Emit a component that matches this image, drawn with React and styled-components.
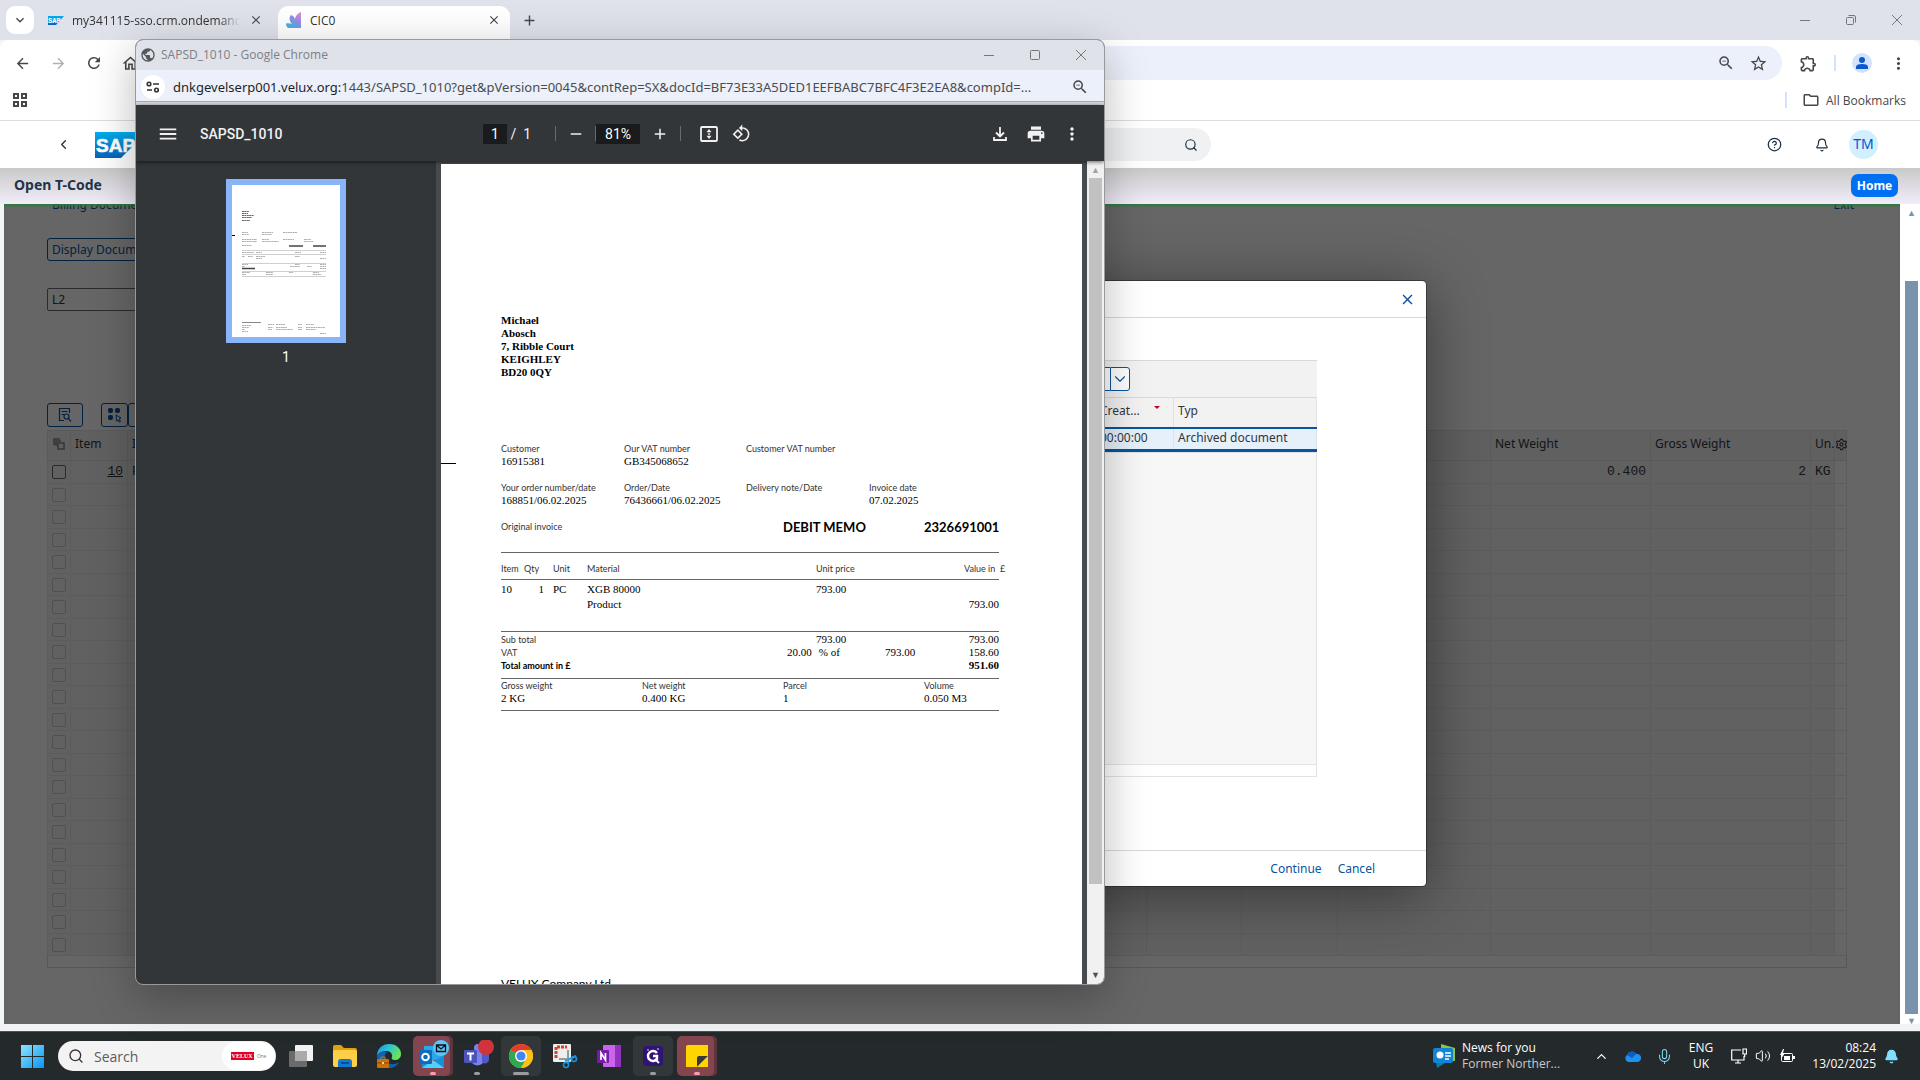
import React from 'react';
import styled, { createGlobalStyle, css } from 'styled-components';
import {
  MdArrowBack, MdArrowForward, MdRefresh, MdOutlineHome, MdZoomOut, MdStarBorder,
  MdOutlineExtension, MdMoreVert, MdPublic, MdMenu, MdRemove, MdAdd,
  MdPrint, MdOutlineFolder, MdClose, MdRotate90DegreesCcw, MdExpandMore,
} from 'react-icons/md';
import { Search, CircleHelp, Bell, Settings, ChevronLeft, ChevronDown, ChevronUp, Mic, Volume2 } from 'lucide-react';

const ui = '"Open Sans", "Noto Sans", sans-serif';
const sap = '"Noto Sans", "Open Sans", sans-serif';
const serif = '"Liberation Serif", "Times New Roman", serif';
const geo = 'Lato, "Open Sans", sans-serif';

const GlobalStyle = createGlobalStyle`
  * { box-sizing: border-box; }
  body { margin: 0; font-family: ${ui}; overflow: hidden; }
  button, input { font-family: inherit; margin: 0; }
  table { border-collapse: collapse; border-spacing: 0; }
  svg { display: block; flex-shrink: 0; }
`;

/* ---------- small drawings ---------- */

const SapLogo = ({ w, h }) => (
  <svg width={w} height={h} viewBox="0 0 52 26" preserveAspectRatio="none">
    <defs>
      <linearGradient id="sapblue" x1="0" y1="0" x2="0" y2="1">
        <stop offset="0" stopColor="#00aeef" />
        <stop offset="1" stopColor="#0a62b8" />
      </linearGradient>
    </defs>
    <path d="M0 0H52L26 26H0Z" fill="url(#sapblue)" />
    <text x="1" y="20" fontFamily="Liberation Sans, sans-serif" fontWeight="700" fontSize="19" fill="#fff" stroke="#fff" strokeWidth=".6">SAP</text>
  </svg>
);

const PetalIcon = () => (
  <svg width="16" height="16" viewBox="0 0 16 16">
    <defs>
      <linearGradient id="petal" x1="1" y1="0" x2="0.3" y2="1">
        <stop offset="0" stopColor="#f08cc8" />
        <stop offset="0.5" stopColor="#8f8ee8" />
        <stop offset="1" stopColor="#3fb4dc" />
      </linearGradient>
    </defs>
    <path d="M15 0V16H3C1 16 0 14 0 11.500C2 11 4 11 6 12C3 9 3 5 5 3C8 4 9 6 9 8C9 4 12 1 15 0Z" fill="url(#petal)" />
  </svg>
);

const MinimizeIcon = () => (
  <svg width="10" height="10"><path d="M0 5.5H10" stroke="#777" fill="none" /></svg>
);
const MaximizeIcon = () => (
  <svg width="10" height="10"><rect x=".5" y=".5" width="9" height="9" rx="1" stroke="#777" fill="none" /></svg>
);
const RestoreIcon = () => (
  <svg width="10" height="10">
    <rect x=".5" y="2.5" width="7" height="7" rx="1" stroke="#777" fill="none" />
    <path d="M2.5 .5H8Q9.5 .5 9.5 2V7.5" stroke="#777" fill="none" />
  </svg>
);
const CrossIcon = () => (
  <svg width="10" height="10"><path d="M0 0L10 10M10 0L0 10" stroke="#777" fill="none" /></svg>
);

const AppsIcon = () => (
  <svg width="14" height="14" fill="none" stroke="#474747" strokeWidth="2">
    <path d="M1 1H5V5H1ZM9 1H13V5H9ZM1 9H5V13H1ZM9 9H13V13H9Z" />
  </svg>
);

const ProfileIcon = () => (
  <svg width="20" height="20">
    <circle cx="10" cy="10" r="10" fill="#d3e3fd" />
    <circle cx="10" cy="7" r="3" fill="#0b57d0" />
    <path d="M4 16V14Q4 11 10 11Q16 11 16 14V16Z" fill="#0b57d0" />
  </svg>
);

const SiteIcon = () => (
  <svg width="14" height="14" fill="none" stroke="#333" strokeWidth="1.6">
    <circle cx="3" cy="4" r="1.8" /><path d="M7 4H13M1 10H6" /><circle cx="10.5" cy="10" r="1.8" />
  </svg>
);

const FitPageIcon = () => (
  <svg width="18" height="16" viewBox="0 0 18 16">
    <rect x="1" y="1" width="16" height="14" rx="1" fill="none" stroke="#f1f1f1" strokeWidth="1.8" />
    <path d="M9 3L11.5 6.3H6.5ZM9 13L11.5 9.7H6.5Z" fill="#f1f1f1" />
    <rect x="8" y="7.3" width="2" height="1.4" fill="#f1f1f1" />
  </svg>
);

const DownloadIcon = () => (
  <svg width="14" height="14" fill="none" stroke="#f1f1f1" strokeWidth="1.8">
    <path d="M7 0V9M3 5.5L7 9.5L11 5.5M1 10V13H13V10" />
  </svg>
);

const FindDocIcon = () => (
  <svg width="14" height="16" fill="none" stroke="#0854a0" strokeWidth="1.2">
    <path d="M6 13.5H1.5V1.5H11.5V6M3.5 4.5H9.5M3.5 7.5H6" />
    <circle cx="8.5" cy="9.5" r="2.5" /><path d="M10.5 11.5L13 14.5" />
  </svg>
);

const SelectAllIcon = ({ outline }) => (
  <svg width="16" height="16">
    <g fill={outline ? 'none' : '#0854a0'} stroke="#0854a0">
      <rect x="1.5" y="1.5" width="4" height="4" rx="1" /><rect x="8.5" y="1.5" width="4" height="4" rx="1" />
      <rect x="1.5" y="8.5" width="4" height="4" rx="1" />
    </g>
    <path d="M9 8L14 11L12 12L13.5 14.5L12 15L11 13L9.5 14Z" fill="none" stroke="#0854a0" />
  </svg>
);

const CopiesIcon = () => (
  <svg width="12" height="12" fill="none" stroke="#85888b" strokeWidth="1.6">
    <path d="M1 7V1H7M3 8V3H8M5 5H11V11H5Z" />
  </svg>
);

const GridIcon = () => (
  <svg width="12" height="12" fill="none" stroke="#0854a0">
    <path d="M.5 .5H11.5V11.5H.5ZM.5 4H11.5M.5 8H11.5M4 .5V11.5M8 .5V11.5" />
  </svg>
);

const Thumbnail = () => {
  const bars = [
    [10, 26, 7], [10, 28, 6], [10, 30, 12], [10, 32, 10], [10, 35, 8],
    [10, 47, 6], [30, 47, 11], [51, 47, 14], [10, 49, 7], [30, 49, 10],
    [10, 54, 15], [30, 54, 7], [51, 54, 11], [72, 54, 7], [10, 56, 15], [30, 56, 17], [72, 56, 9],
    [10, 60, 10], [10, 67, 12], [24, 67, 6], [63, 67, 6], [88, 67, 6],
    [10, 71, 3], [16, 71, 5], [24, 71, 9], [63, 71, 5], [24, 73, 6], [88, 73, 6],
    [10, 79, 6], [63, 79, 5], [88, 79, 6], [10, 81, 3], [58, 81, 10], [75, 81, 5], [88, 81, 6],
    [88, 83, 6], [10, 87, 8], [34, 87, 7], [57, 87, 4], [81, 87, 6], [10, 89, 4], [34, 89, 7], [81, 89, 8],
    [10, 140, 9], [36, 139, 6], [44, 139, 9], [66, 139, 4], [74, 139, 8], [10, 142, 7], [36, 142, 5],
    [44, 142, 11], [66, 142, 4], [74, 142, 19], [10, 144, 3], [36, 144, 4], [44, 144, 17], [66, 144, 4], [74, 144, 10],
    [10, 146, 6], [88, 148, 6],
  ];
  return (
    <svg width="108" height="152">
      <rect width="108" height="152" fill="#fff" />
      {bars.map(([x, y, w], i) => (
        <path key={i} d={`M${x} ${y}.5h${w}`} stroke={i < 5 ? '#666' : '#b0b0b0'} strokeDasharray="2 .4" />
      ))}
      <path d="M57 61h14M81 61h13M10 83.5h13" stroke="#444" strokeWidth="1.5" />
      <path d="M10 137.5h19" stroke="#888" />
      <path d="M10 65.5h84M10 69.5h84M10 78.5h84M10 86.5h84M10 91.5h84" stroke="#d0d0d0" />
      <path d="M0 50.5h3" stroke="#000" />
    </svg>
  );
};

/* ---------- taskbar drawings ---------- */

const WindowsLogo = () => (
  <svg width="23" height="23" viewBox="0 0 23 23">
    <defs>
      <linearGradient id="win" x1="0" y1="0" x2="1" y2="1">
        <stop offset="0" stopColor="#8fe4ff" /><stop offset="1" stopColor="#0a94f0" />
      </linearGradient>
    </defs>
    <path d="M0 0H11V11H0ZM12 0H23V11H12ZM0 12H11V23H0ZM12 12H23V23H12Z" fill="url(#win)" />
  </svg>
);
const TaskViewIcon = () => (
  <svg width="24" height="22">
    <rect x="6" width="18" height="16" rx="1" fill="#f2f2f2" />
    <rect y="6" width="18" height="16" rx="1" fill="#777" fillOpacity=".85" />
    <rect x="6" y="6" width="12" height="10" fill="#aaa" />
  </svg>
);
const FolderIcon = () => (
  <svg width="24" height="22">
    <path d="M0 2Q0 0 2 0H8L11 3H22Q24 3 24 5V10H0Z" fill="#e0a010" />
    <rect y="5" width="24" height="17" rx="2" fill="#ffcf48" />
    <path d="M5 22V17Q5 14 8 14H16Q19 14 19 17V22Z" fill="#1377cf" />
    <path d="M8 18H16" stroke="#0a4d92" strokeWidth="2" />
  </svg>
);
const EdgeIcon = () => (
  <svg width="26" height="26" viewBox="0 0 26 26">
    <defs>
      <linearGradient id="edge" x1="0" y1="0" x2="1" y2=".4">
        <stop offset="0" stopColor="#1b8fe0" /><stop offset=".5" stopColor="#2cc3d5" /><stop offset="1" stopColor="#6be35b" />
      </linearGradient>
    </defs>
    <path d="M1 13C1 5 7 1 13 1C21 1 25 6 25 11C25 15 22 17 19 17C16 17 15 16 16 14C17 11 14 8 11 8C7 8 3 9 1 13Z" fill="url(#edge)" />
    <path d="M1 13C3 9 7 8 11 9C8 11 8 16 11 19C14 22 19 22 23 19C21 23 17 25 13 25C6 25 1 20 1 13Z" fill="#0f63b5" />
    <rect x="1" y="16" width="12" height="9" rx="1" fill="#c9720c" /><path d="M1 20H13" stroke="#8a4700" />
    <path d="M5 16V14H9V16" stroke="#c9720c" fill="none" /><rect x="6" y="19" width="2" height="2" fill="#ffd25e" />
  </svg>
);
const OutlookIcon = () => (
  <svg width="36" height="32" viewBox="0 0 36 32">
    <rect x="9" y="6" width="18" height="14" fill="#28a8ea" />
    <path d="M7 15L18 22L29 15V28H7Z" fill="#1490df" />
    <path d="M7 28L18 20L29 28Z" fill="#50d0ff" />
    <rect x="4" y="10" width="13" height="14" rx="1" fill="#0f6cbd" />
    <circle cx="10.5" cy="17" r="3.3" fill="none" stroke="#fff" strokeWidth="2" />
    <circle cx="26" cy="8" r="8" fill="#5cc5f8" />
    <path d="M21.5 5H30.5V11.5H21.5ZM21.5 5L26 9L30.5 5" fill="none" stroke="#111" strokeWidth="1.3" />
  </svg>
);
const TeamsIcon = () => (
  <svg width="34" height="32" viewBox="0 0 34 32">
    <circle cx="18" cy="8" r="4" fill="#7b83eb" />
    <path d="M11 12H24V21A7 7 0 0 1 11 21Z" fill="#7b83eb" /><path d="M22 12H29V20A4 4 0 0 1 22 22Z" fill="#5059c9" />
    <rect x="4" y="10" width="13" height="13" rx="1" fill="#4b53bc" />
    <path d="M7 13.5H14M10.5 13.5V20.5" stroke="#fff" strokeWidth="2" />
    <circle cx="26" cy="7" r="8" fill="#d13438" />
  </svg>
);
const ChromeIcon = () => (
  <svg width="24" height="24" viewBox="0 0 24 24">
    <circle cx="12" cy="12" r="12" fill="#fbc116" />
    <path d="M12 12L1.6 6A12 12 0 0 1 22.4 6Z" fill="#e33b2e" />
    <path d="M12 12L1.6 6A12 12 0 0 0 12 24L17 15Z" fill="#2da94f" />
    <path d="M12 6H22.4A12 12 0 0 1 12 24L17.2 15Z" fill="#fbc116" />
    <circle cx="12" cy="12" r="6" fill="#fff" /><circle cx="12" cy="12" r="4.6" fill="#4285f4" />
  </svg>
);
const SnipIcon = () => (
  <svg width="26" height="26" viewBox="0 0 26 26">
    <rect x="1" y="1" width="18" height="18" rx="1" fill="#eee" />
    <path d="M4 15V4H15" fill="none" stroke="#d8401f" strokeWidth="3" strokeDasharray="3 1" />
    <path d="M7 16H16V7" stroke="#999" strokeWidth="2" fill="none" />
    <path d="M13 18L24 13M16 21L17 15" stroke="#2aa3e8" strokeWidth="2" />
    <circle cx="14" cy="22" r="2.5" fill="none" stroke="#1e8fd8" strokeWidth="1.6" />
    <circle cx="22" cy="16" r="2.5" fill="none" stroke="#1e8fd8" strokeWidth="1.6" />
  </svg>
);
const OneNoteIcon = () => (
  <svg width="24" height="22" viewBox="0 0 24 22">
    <rect x="6" width="18" height="22" rx="1" fill="#ca64ea" /><path d="M18 0H24V22H18Z" fill="#9332bf" />
    <rect y="5" width="12" height="13" rx="1" fill="#7719aa" />
    <path d="M4 15V8L8.5 15V8" stroke="#fff" strokeWidth="1.7" fill="none" />
  </svg>
);
const PurpleIcon = () => (
  <svg width="20" height="20" viewBox="0 0 20 20">
    <rect width="20" height="20" rx="3" fill="#2f1375" />
    <path d="M14 7A5 5 0 1 0 14 13V10H10" fill="none" stroke="#fff" strokeWidth="2.4" />
    <path d="M12 13L16 17" stroke="#fff" strokeWidth="2" />
    <circle cx="5" cy="4" r=".8" fill="#fff" /><circle cx="15" cy="3" r=".8" fill="#fff" />
  </svg>
);
const NotesIcon = () => (
  <svg width="22" height="22">
    <path d="M0 2Q0 0 2 0H22V11L11 22H0Z" fill="#ffd500" />
    <path d="M11 22V13Q11 11 13 11H22Z" fill="#383838" />
    <path d="M22 11V22H11Z" fill="#ffd500" />
  </svg>
);
const NewsIcon = () => (
  <svg width="24" height="24" viewBox="0 0 24 24">
    <path d="M8 0L22 4V17H8Z" fill="#8bc53f" /><path d="M2 12L20 14L4 24Z" fill="#0b7fa8" />
    <rect x="0" y="4" width="20" height="15" rx="2" fill="#1284d8" />
    <circle cx="7" cy="11" r="3.5" fill="#fff" /><path d="M12 9H18M12 12H18M12 15H16" stroke="#fff" strokeWidth="1.4" />
  </svg>
);
const CloudIcon = () => (
  <svg width="17" height="11" viewBox="0 0 17 11">
    <path d="M4 11A4 4 0 0 1 3 4A5 5 0 0 1 12 3A4 4 0 0 1 14 11Z" fill="#1e90f0" />
    <path d="M3 4A5 5 0 0 1 12 3L8 7Z" fill="#0a5cc0" />
  </svg>
);
const NetworkIcon = () => (
  <svg width="16" height="16" fill="none" stroke="#fff" strokeWidth="1.2">
    <path d="M10 2H.7V12H13V8M4 15H10M7 12V15M12 1H15.5V6H12ZM13.7 6V9" />
  </svg>
);
const BatteryIcon = () => (
  <svg width="16" height="14" viewBox="0 0 16 14">
    <rect x="2.5" y="4.5" width="11" height="8" rx="1" fill="none" stroke="#fff" />
    <rect x="5" y="7" width="6" height="4" fill="#fff" />
    <path d="M14 7H16V10H14Z" fill="#fff" />
    <path d="M4 0L1 6H3L2 10L6 4H4L5 0Z" fill="#fff" />
  </svg>
);

/* ---------- main browser window ---------- */

const Desktop = styled.div`
  position: relative;
  display: flex;
  flex-direction: column;
  height: 100vh;
  background: #f1f3f4;
`;

const IconButton = styled.button`
  display: flex;
  align-items: center;
  justify-content: center;
  width: ${p => p.$w || 28}px;
  height: ${p => p.$h || 28}px;
  padding: 0;
  border: 0;
  border-radius: ${p => p.$r || 0}px;
  background: ${p => p.$bg || 'transparent'};
  color: ${p => p.$color || '#474747'};
  flex-shrink: 0;
`;

const TabStrip = styled.div`
  display: flex;
  align-items: center;
  height: 40px;
  padding-left: 6px;
  background: #dfe2ea;
  flex-shrink: 0;
`;

const Tab = styled.div`
  display: flex;
  align-items: center;
  align-self: flex-end;
  gap: 8px;
  width: ${p => (p.$active ? 232 : 244)}px;
  height: 34px;
  padding: ${p => (p.$active ? '0 8px 6px' : '0 14px 6px')};
  border-radius: 10px 10px 0 0;
  background: ${p => (p.$active ? '#fff' : 'transparent')};
  font-size: 12px;
  color: #333;
`;

const TabTitle = styled.span`
  flex: 1;
  overflow: hidden;
  white-space: nowrap;
  ${p => p.$fade && css`
    mask-image: linear-gradient(90deg, #000 88%, transparent);
  `}
`;

const WindowButtons = styled.div`
  display: flex;
  margin-left: auto;
`;

const Divider = styled.span`
  width: 2px;
  height: 16px;
  background: #d3e3fd;
`;

const Toolbar = styled.div`
  display: flex;
  align-items: center;
  height: 46px;
  padding: 0 8px;
  gap: 8px;
  background: #fff;
  border-radius: 8px 8px 0 0;
  flex-shrink: 0;
  ${Divider} { margin-right: 4px; }
`;

const Omnibox = styled.div`
  display: flex;
  align-items: center;
  justify-content: flex-end;
  gap: 4px;
  flex: 1;
  height: 34px;
  padding-right: 10px;
  border-radius: 17px;
  background: #ecf0fa;
`;

const Bookmarks = styled.div`
  display: flex;
  align-items: center;
  justify-content: space-between;
  height: 35px;
  padding: 0 14px 6px 13px;
  background: #fff;
  border-bottom: 1px solid #dcdde0;
  flex-shrink: 0;
`;

const BookmarkLink = styled.a`
  display: flex;
  align-items: center;
  gap: 6px;
  font-size: 12px;
  color: #474747;
  text-decoration: none;
  ${Divider} { margin-right: 9px; }
`;

const Shell = styled.header`
  display: flex;
  align-items: center;
  height: 47px;
  padding: 0 42px 0 49px;
  background: #fff;
  flex-shrink: 0;
`;

const LogoLink = styled.a`
  margin-left: 18px;
`;

const ShellSearch = styled.div`
  display: flex;
  align-items: center;
  justify-content: flex-end;
  width: 500px;
  height: 33px;
  margin: 0 auto 0 564px;
  padding-right: 6px;
  border-radius: 17px;
  background: #eff1f2;
`;

const ShellActions = styled.div`
  display: flex;
  align-items: center;
  gap: 8px;
`;

const Avatar = styled.button`
  width: 29px;
  height: 29px;
  padding: 0 0 2px;
  border: 0;
  border-radius: 50%;
  background: #d1efff;
  color: #0057d2;
  font: 14px ${sap};
`;

const CodeBar = styled.div`
  display: flex;
  align-items: center;
  justify-content: space-between;
  height: 36px;
  padding: 0 22px 2px 14px;
  background: linear-gradient(#c9c9c9, #f1edf9);
  flex-shrink: 0;
`;

const CodeTitle = styled.h1`
  margin: 0;
  font: 700 14px/20px ${sap};
  color: #223548;
`;

const HomeButton = styled.button`
  width: 47px;
  height: 23px;
  padding: 0;
  border: 0;
  border-radius: 7px;
  background: #0070f2;
  color: #fff;
  font: 700 12px ${sap};
`;

const Stage = styled.div`
  display: flex;
  flex: 1;
  min-height: 0;
  padding-left: 4px;
  margin-bottom: 7px;
  background: #f4f5f6;
`;

const Screen = styled.main`
  position: relative;
  flex: 1;
  overflow: hidden;
  background: #fff;
  font: 12px ${sap};
  color: #32363a;
`;

const Shade = styled.div`
  position: absolute;
  inset: 0;
  background: rgba(0, 0, 0, 0.6);
  box-shadow: inset 0 3px 3px -1px #2c7a40;
`;

const MenuRow = styled.nav`
  display: flex;
  justify-content: space-between;
  margin-top: -10px;
  padding: 0 46px 0 48px;
  line-height: 22px;
  a { color: #0854a0; text-decoration: none; }
`;

const Form = styled.div`
  display: flex;
  flex-direction: column;
  padding: 22px 53px 0 43px;
`;

const OutlineButton = styled.button`
  display: flex;
  align-items: center;
  justify-content: ${p => (p.$start ? 'flex-start' : 'center')};
  width: ${p => p.$w}px;
  height: ${p => p.$h || 24}px;
  padding: 0 4px;
  border: 1px solid #0854a0;
  border-radius: 3px;
  background: #fff;
  color: #0854a0;
  font: 12px ${sap};
  white-space: nowrap;
`;

const DocInput = styled.input`
  width: 240px;
  height: 23px;
  margin: 27px 0 92px;
  padding: 0 4px;
  border: 1px solid #6a6d70;
  border-radius: 2px;
  font: 12px ${sap};
  color: #32363a;
`;

const ButtonRow = styled.div`
  display: flex;
  margin-bottom: 3px;
  ${OutlineButton}:first-child { margin-right: 18px; }
`;

const ItemTable = styled.table`
  width: 100%;
  table-layout: fixed;
  border: 1px solid #d9d9d9;
  th {
    height: 30px;
    padding: 0 4px 4px;
    background: #efefef;
    border: 1px solid #e2e2e2;
    font-weight: 400;
    text-align: left;
    white-space: nowrap;
  }
  td {
    height: 22px;
    padding: 0 4px;
    border: 1px solid #e5e5e5;
    background: #f3f3f3;
    font: 13px/20px "Liberation Mono", monospace;
    white-space: nowrap;
  }
  tr:nth-child(odd) td { height: 23px; }
  td.num { text-align: right; }
  td.rail { background: #fff; }
  svg { margin: 0 auto; }
  th:last-child { padding: 0 0 3px; }
`;

const Check = styled.input`
  display: block;
  appearance: none;
  width: 14px;
  height: 14px;
  border: 1px solid ${p => (p.disabled ? '#c8c8c8' : '#6a6d70')};
  border-radius: 2px;
`;

const TableFoot = styled.div`
  height: 12px;
  border: 1px solid #d9d9d9;
  border-top: 0;
`;

const PageRail = styled.div`
  display: flex;
  flex-direction: column;
  align-items: center;
  width: 20px;
  padding: 6px 2px 0 5px;
  background: #fff;
  color: #7a93ac;
  font-size: 9px;
  line-height: 6px;
`;

const PageThumb = styled.div`
  width: 13px;
  flex: 1;
  margin: 65px 0 4px;
  background: #7a93ac;
`;

const Dialog = styled.section`
  position: absolute;
  top: 77px;
  left: 25%;
  right: 25%;
  bottom: 138px;
  display: flex;
  flex-direction: column;
  background: #fff;
  border-radius: 4px;
  box-shadow: 0 8px 60px rgba(0, 0, 0, 0.45), 0 0 0 1px rgba(0, 0, 0, 0.35);
`;

const DialogHead = styled.div`
  display: flex;
  align-items: center;
  justify-content: flex-end;
  height: 37px;
  padding-right: 5px;
  border-bottom: 1px solid #d9d9d9;
`;

const DialogBody = styled.div`
  display: flex;
  flex-direction: column;
  flex: 1;
  padding: 42px 109px 73px;
`;

const DialogTools = styled.div`
  display: flex;
  align-items: center;
  justify-content: flex-end;
  height: 37px;
  padding-right: 187px;
  background: #f2f2f2;
  border-top: 1px solid #d9d9d9;
  ${OutlineButton}:first-child { border-radius: 3px 0 0 3px; border-right: 0; }
  ${OutlineButton}:last-child { border-radius: 0 3px 3px 0; padding: 0; }
`;

const ArchiveTable = styled.table`
  width: 100%;
  table-layout: fixed;
  th, td { padding: 0 4px 3px; font-weight: 400; text-align: left; white-space: nowrap; }
  th {
    height: 30px;
    background: #f2f2f2;
    border: 1px solid #e2e2e2;
    border-top-color: #d9d9d9;
  }
  td {
    height: 23px;
    line-height: 15px;
    background: #e5f0fa;
    border: 1px solid #dfe3e8;
    border-top: 2px solid #0854a0;
    border-bottom: 3px solid #0854a0;
  }
`;

const SortCell = styled.span`
  display: flex;
  align-items: center;
  gap: 14px;
  svg { margin-bottom: 6px; }
`;

const DialogFill = styled.div`
  flex: 1;
  background: #f7f7f7;
  border: 1px solid #e2e2e2;
`;

const DialogScroll = styled.div`
  height: 12px;
  border: 1px solid #e2e2e2;
  border-top: 0;
`;

const DialogFoot = styled.div`
  display: flex;
  align-items: center;
  justify-content: flex-end;
  gap: 16px;
  height: 36px;
  padding-right: 51px;
  border-top: 1px solid #d9d9d9;
`;

const TextButton = styled.button`
  padding: 0;
  border: 0;
  background: none;
  color: #0854a0;
  font: 12px ${sap};
`;

/* ---------- document viewer window ---------- */

const PopupShadow = styled.div`
  position: absolute;
  top: 39px;
  left: 135px;
  width: 970px;
  bottom: 95px;
  border-radius: 8px;
  box-shadow: 0 12px 44px rgba(0, 0, 0, 0.28);
`;

const Popup = styled(PopupShadow)`
  display: flex;
  flex-direction: column;
  overflow: hidden;
  border: 1px solid #98999c;
  background: #323639;
  box-shadow: none;
`;

const PopupTitle = styled.div`
  display: flex;
  align-items: center;
  gap: 5px;
  height: 30px;
  padding: 0 0 1px 4px;
  background: #dfe2e9;
  color: #7d7f83;
  font-size: 12px;
  svg { color: #55585c; }
`;

const PopupAddress = styled.div`
  display: flex;
  align-items: center;
  gap: 8px;
  height: 35px;
  padding: 1px 10px 0 5px;
  background: #ecf0fa;
  border-bottom: 3px solid #d5d7db;
  box-shadow: inset 0 -1px #a9acb1;
`;

const Url = styled.span`
  flex: 1;
  overflow: hidden;
  font: 13px/20px ${sap};
  white-space: nowrap;
  color: #4a4c50;
  b { font-weight: 400; color: #1f1f1f; }
`;

const PdfBar = styled.div`
  position: relative;
  display: grid;
  grid-template-columns: 333px 1fr auto;
  align-items: center;
  height: 56px;
  padding: 1px 14px 0;
  background: #323639;
  color: #f1f1f1;
  box-shadow: 0 1px 4px rgba(0, 0, 0, 0.6);
  font: 14px Roboto, sans-serif;
  flex-shrink: 0;
`;

const PdfGroup = styled.div`
  display: flex;
  align-items: center;
  gap: ${p => p.$gap || 0}px;
`;

const PdfTitle = styled.span`
  font: 500 14px Roboto, sans-serif;
`;

const PdfInput = styled.input`
  width: ${p => p.$w}px;
  height: 20px;
  padding: 0;
  border: 0;
  background: #191b1c;
  color: #fff;
  text-align: center;
  font: 14px Roboto, sans-serif;
`;

const PdfRule = styled.span`
  width: 1px;
  height: 15px;
  margin: 0 ${p => p.$r || 0}px 0 ${p => p.$l || 0}px;
  background: #686b6e;
`;

const PdfBody = styled.div`
  display: flex;
  flex: 1;
  min-height: 0;
`;

const Outline = styled.aside`
  display: flex;
  flex-direction: column;
  align-items: center;
  gap: 5px;
  width: 300px;
  padding-top: 18px;
  color: #fff;
  font: 14px/18px Roboto, sans-serif;
`;

const ThumbButton = styled.button`
  padding: 0;
  border: 6px solid #8ab4f8;
  background: #fff;
`;

const Canvas = styled.div`
  flex: 1;
  min-width: 0;
  overflow: hidden;
  padding: 3px 5px 0;
  background: #484b4e;
`;

const Sheet = styled.article`
  position: relative;
  height: 907px;
  padding: 150px 83px 0 60px;
  background: #fff;
  color: #000;
  font: 11px/13px ${serif};
`;

const FoldMark = styled.span`
  position: absolute;
  top: 299px;
  left: 0;
  width: 15px;
  height: 1px;
  background: #000;
`;

const Address = styled.address`
  margin-bottom: 64px;
  font-style: normal;
  font-weight: 700;
`;

const Facts = styled.dl`
  display: grid;
  grid-template-columns: ${p => p.$cols};
  margin: 0;
  padding: ${p => p.$pad};
  border-bottom: ${p => (p.$line ? '1px solid #666' : '0')};
  dt { font: 9px/12px ${geo}; color: #333; white-space: nowrap; }
  dd { margin: 0; height: 13px; white-space: nowrap; }
`;

const MemoRow = styled.div`
  display: grid;
  grid-template-columns: 282px 141px 1fr;
  align-items: center;
  height: 20px;
  font: 9px/12px ${geo};
  color: #333;
  white-space: nowrap;
  strong { font: 700 13px/20px ${geo}; color: #000; }
`;

const Lines = styled.table`
  width: 100%;
  table-layout: fixed;
  margin-top: 15px;
  border-top: 1px solid #666;
  th, td { padding: 0; text-align: left; white-space: nowrap; }
  th { padding: 6px 0 0; height: 27px; font: 9px/12px ${geo}; color: #333; border-bottom: 1px solid #666; }
  td { height: 15px; vertical-align: bottom; }
  tbody tr:first-child td { height: 16px; }
  .right { text-align: right; }
  .qty { padding-right: 9px; text-align: right; }
`;

const Totals = styled.table`
  width: 100%;
  table-layout: fixed;
  margin-top: 20px;
  border-top: 1px solid #666;
  border-bottom: 1px solid #666;
  th, td { height: 13px; padding: 0; line-height: 13px; white-space: nowrap; }
  th { font: 9px/13px ${geo}; color: #333; text-align: left; }
  td:last-child { text-align: right; }
  tr:first-child > * { padding-top: 1px; }
  tr:last-child > * { padding-bottom: 6px; font-weight: 700; color: #000; }
`;

const Company = styled.p`
  margin: 265px 0 0;
  font: 12px/16px ${geo};
`;

const PdfRail = styled.div`
  display: flex;
  flex-direction: column;
  align-items: center;
  width: 17px;
  padding: 6px 2px;
  background: #f1f1f1;
  color: #505050;
  font-size: 9px;
  line-height: 6px;
  span:first-child { color: #a3a3a3; }
`;

const PdfThumb = styled.div`
  width: 13px;
  height: 87%;
  margin: 5px 0 auto;
  background: #c1c1c1;
`;

/* ---------- taskbar ---------- */

const Taskbar = styled.footer`
  display: flex;
  align-items: center;
  height: 49px;
  padding: 0 14px 0 21px;
  background: #242a2b;
  border-top: 1px solid #4d5253;
  color: #fff;
  flex-shrink: 0;
`;

const SearchPill = styled.label`
  display: flex;
  align-items: center;
  gap: 10px;
  width: 218px;
  height: 30px;
  margin: 0 3px 0 14px;
  padding: 0 1px 0 10px;
  border-radius: 15px;
  background: #f3f3f3;
  color: #333;
  input {
    flex: 1;
    min-width: 0;
    padding: 0;
    border: 0;
    background: none;
    font-size: 14px;
    &::placeholder { color: #5c5c5c; opacity: 1; }
  }
`;

const Promo = styled.span`
  display: flex;
  align-items: center;
  justify-content: center;
  gap: 3px;
  width: 53px;
  height: 28px;
  border-radius: 14px;
  background: #fff;
  font-size: 5px;
  color: #777;
  b { padding: 0 1px; background: #e2001a; color: #fff; font: 700 6px/8px ${serif}; }
`;

const TaskItem = styled.button`
  position: relative;
  display: flex;
  align-items: center;
  justify-content: center;
  width: 40px;
  height: 40px;
  margin: 0 2px;
  padding: 0;
  border: 0;
  border-radius: 5px;
  background: ${p => (p.$alert ? '#84454e' : p.$open ? '#32383a' : 'transparent')};
  box-shadow: ${p => (p.$alert ? 'inset -3px 0 #5e353c' : 'none')};
  &::after {
    content: '';
    position: absolute;
    bottom: 1px;
    width: ${p => p.$dot || 0}px;
    height: 3px;
    border-radius: 2px;
    background: ${p => (p.$alert ? '#ff9aa8' : '#9a9d9e')};
  }
`;

const Tray = styled.div`
  display: flex;
  align-items: center;
  margin-left: auto;
  font-size: 12px;
  line-height: 16px;
`;

const News = styled.button`
  display: flex;
  align-items: center;
  gap: 5px;
  width: 159px;
  padding: 0;
  border: 0;
  background: none;
  color: #fff;
  font-size: 12px;
  line-height: 16px;
  text-align: left;
  white-space: nowrap;
  small { display: block; font-size: 12px; color: #c9cbcc; }
`;

const TrayCell = styled.div`
  display: flex;
  justify-content: ${p => (p.$end ? 'flex-end' : 'center')};
  width: ${p => p.$w}px;
  text-align: ${p => (p.$end ? 'right' : 'center')};
`;

const taskItems = [
  { label: 'Task view', icon: <TaskViewIcon /> },
  { label: 'File Explorer', icon: <FolderIcon /> },
  { label: 'Edge', icon: <EdgeIcon /> },
  { label: 'Outlook', icon: <OutlookIcon />, alert: true, dot: 6 },
  { label: 'Teams', icon: <TeamsIcon />, dot: 6 },
  { label: 'Chrome', icon: <ChromeIcon />, open: true, dot: 16 },
  { label: 'Snipping Tool', icon: <SnipIcon /> },
  { label: 'OneNote', icon: <OneNoteIcon /> },
  { label: 'Recorder', icon: <PurpleIcon />, open: true, dot: 6 },
  { label: 'Sticky Notes', icon: <NotesIcon />, alert: true, dot: 6 },
];

const emptyRows = Array.from({ length: 21 }, (_, i) => i);

const Cols = ({ widths }) => (
  <colgroup>
    {widths.map((w, i) => <col key={i} width={w || undefined} />)}
  </colgroup>
);

const Invoice = () => (
  <Sheet>
    <FoldMark />
    <Address>
      Michael<br />Abosch<br />7, Ribble Court<br />KEIGHLEY<br />BD20 0QY
    </Address>
    <Facts $cols="123px 122px 123px 1fr" $pad="0 0 14px">
      <div><dt>Customer</dt><dd>16915381</dd></div>
      <div><dt>Our VAT number</dt><dd>GB345068652</dd></div>
      <div><dt>Customer VAT number</dt><dd /></div>
    </Facts>
    <Facts $cols="123px 122px 123px 1fr" $pad="0 0 10px">
      <div><dt>Your order number/date</dt><dd>168851/06.02.2025</dd></div>
      <div><dt>Order/Date</dt><dd>76436661/06.02.2025</dd></div>
      <div><dt>Delivery note/Date</dt><dd /></div>
      <div><dt>Invoice date</dt><dd>07.02.2025</dd></div>
    </Facts>
    <MemoRow>
      <span>Original invoice</span>
      <strong>DEBIT MEMO</strong>
      <strong>2326691001</strong>
    </MemoRow>
    <Lines>
      <Cols widths={[23, 29, 34, 229, 0, 35]} />
      <thead>
        <tr><th>Item</th><th>Qty</th><th>Unit</th><th>Material</th><th>Unit price</th><th>Value in &nbsp;£</th></tr>
      </thead>
      <tbody>
        <tr><td>10</td><td className="qty">1</td><td>PC</td><td>XGB 80000</td><td>793.00</td><td /></tr>
        <tr><td /><td /><td /><td>Product</td><td /><td className="right">793.00</td></tr>
      </tbody>
    </Lines>
    <Totals>
      <Cols widths={[0, 29, 69, 54, 60]} />
      <tbody>
        <tr><th>Sub total</th><td /><td>793.00</td><td /><td>793.00</td></tr>
        <tr><th>VAT</th><td>20.00</td><td>&nbsp;% of</td><td>793.00</td><td>158.60</td></tr>
        <tr><th>Total amount in £</th><td /><td /><td /><td>951.60</td></tr>
      </tbody>
    </Totals>
    <Facts $cols="141px 141px 141px 1fr" $pad="1px 0 5px" $line>
      <div><dt>Gross weight</dt><dd>2 KG</dd></div>
      <div><dt>Net weight</dt><dd>0.400 KG</dd></div>
      <div><dt>Parcel</dt><dd>1</dd></div>
      <div><dt>Volume</dt><dd>0.050 M3</dd></div>
    </Facts>
    <Company>VELUX Company Ltd</Company>
  </Sheet>
);

const Viewer = () => (
  <Popup as="section">
    <PopupTitle>
      <MdPublic size={16} />
      <span>SAPSD_1010 - Google Chrome</span>
      <WindowButtons>
        <IconButton $w={46} aria-label="Minimise"><MinimizeIcon /></IconButton>
        <IconButton $w={46} aria-label="Maximise"><MaximizeIcon /></IconButton>
        <IconButton $w={46} aria-label="Close"><CrossIcon /></IconButton>
      </WindowButtons>
    </PopupTitle>
    <PopupAddress>
      <IconButton $w={24} $h={24} $r={12} $bg="#fff" aria-label="Site information"><SiteIcon /></IconButton>
      <Url><b>dnkgevelserp001.velux.org:</b>1443/SAPSD_1010?get&amp;pVersion=0045&amp;contRep=SX&amp;docId=BF73E33A5DED1EEFBABC7BFC4F3E2EA8&amp;compId=...</Url>
      <IconButton $w={28} $h={24} aria-label="Zoom"><MdZoomOut size={18} /></IconButton>
    </PopupAddress>
    <PdfBar>
      <PdfGroup $gap={14}>
        <IconButton $color="#f1f1f1" $w={36} aria-label="Menu"><MdMenu size={22} /></IconButton>
        <PdfTitle>SAPSD_1010</PdfTitle>
      </PdfGroup>
      <PdfGroup>
        <PdfInput $w={24} defaultValue="1" aria-label="Page" />
        <span>&nbsp;/&nbsp; 1</span>
        <PdfRule $l={24} $r={6} />
        <IconButton $color="#f1f1f1" $w={28} aria-label="Zoom out"><MdRemove size={18} /></IconButton>
        <PdfRule $l={5} />
        <PdfInput $w={44} defaultValue="81%" aria-label="Zoom level" />
        <IconButton $color="#f1f1f1" $w={40} aria-label="Zoom in"><MdAdd size={18} /></IconButton>
        <PdfRule $r={10} />
        <IconButton $color="#f1f1f1" $w={36} aria-label="Fit to page"><FitPageIcon /></IconButton>
        <IconButton $color="#f1f1f1" $w={28} aria-label="Rotate"><MdRotate90DegreesCcw size={19} /></IconButton>
      </PdfGroup>
      <PdfGroup>
        <IconButton $color="#f1f1f1" $w={36} aria-label="Download"><DownloadIcon /></IconButton>
        <IconButton $color="#f1f1f1" $w={36} aria-label="Print"><MdPrint size={20} /></IconButton>
        <IconButton $color="#f1f1f1" $w={36} aria-label="More"><MdMoreVert size={20} /></IconButton>
      </PdfGroup>
    </PdfBar>
    <PdfBody>
      <Outline>
        <ThumbButton aria-label="Page 1"><Thumbnail /></ThumbButton>
        <span>1</span>
      </Outline>
      <Canvas><Invoice /></Canvas>
      <PdfRail><span>▲</span><PdfThumb /><span>▼</span></PdfRail>
    </PdfBody>
  </Popup>
);

const ArchiveDialog = () => (
  <Dialog>
    <DialogHead>
      <IconButton $color="#0854a0" aria-label="Close dialog"><MdClose size={17} /></IconButton>
    </DialogHead>
    <DialogBody>
      <DialogTools>
        <OutlineButton $w={30} aria-label="View"><GridIcon /></OutlineButton>
        <OutlineButton $w={20} aria-label="More views"><ChevronDown size={18} strokeWidth={1.5} /></OutlineButton>
      </DialogTools>
      <ArchiveTable>
        <Cols widths={[0, 78, 143]} />
        <thead>
          <tr>
            <th />
            <th><SortCell>Creat… <svg width="6" height="3"><path d="M0 0H6L3 3Z" fill="#c00020" /></svg></SortCell></th>
            <th>Typ</th>
          </tr>
        </thead>
        <tbody>
          <tr><td /><td>00:00:00</td><td>Archived document</td></tr>
        </tbody>
      </ArchiveTable>
      <DialogFill />
      <DialogScroll />
    </DialogBody>
    <DialogFoot>
      <TextButton>Continue</TextButton>
      <TextButton>Cancel</TextButton>
    </DialogFoot>
  </Dialog>
);

const BillingTable = () => (
  <>
    <ItemTable>
      <Cols widths={[23, 57, 0, 95, 96, 153, 160, 160, 24, 12]} />
      <thead>
        <tr>
          <th><CopiesIcon /></th><th>Item</th><th>Item Category</th><th /><th /><th />
          <th>Net Weight</th><th>Gross Weight</th><th>Un.</th><th><Settings size={13} strokeWidth={2} /></th>
        </tr>
      </thead>
      <tbody>
        <tr>
          <td><Check type="checkbox" aria-label="Select item 10" /></td>
          <td className="num"><u>10</u></td><td>F</td><td /><td /><td />
          <td className="num">0.400</td><td className="num">2</td><td>KG</td><td className="rail" />
        </tr>
        {emptyRows.map((row) => (
          <tr key={row}>
            <td><Check type="checkbox" disabled aria-label="Empty row" /></td>
            <td /><td /><td /><td /><td /><td /><td /><td /><td className="rail" />
          </tr>
        ))}
      </tbody>
    </ItemTable>
    <TableFoot />
  </>
);

const App = () => {
  return (
    <Desktop>
      <GlobalStyle />
      <TabStrip>
        <IconButton $bg="#fff" $r={9} aria-label="Search tabs"><MdExpandMore size={16} /></IconButton>
        <Tab>
          <SapLogo w={16} h={9} />
          <TabTitle $fade>my341115-sso.crm.ondemand.com</TabTitle>
          <IconButton $w={16} $h={16} aria-label="Close tab"><MdClose size={14} /></IconButton>
        </Tab>
        <Tab $active>
          <PetalIcon />
          <TabTitle>CIC0</TabTitle>
          <IconButton $w={16} $h={16} aria-label="Close tab"><MdClose size={14} /></IconButton>
        </Tab>
        <IconButton $w={38} aria-label="New tab"><MdAdd size={17} /></IconButton>
        <WindowButtons>
          <IconButton $w={46} aria-label="Minimise"><MinimizeIcon /></IconButton>
          <IconButton $w={46} aria-label="Restore"><RestoreIcon /></IconButton>
          <IconButton $w={46} aria-label="Close"><CrossIcon /></IconButton>
        </WindowButtons>
      </TabStrip>
      <Toolbar>
        <IconButton aria-label="Back"><MdArrowBack size={17} /></IconButton>
        <IconButton $color="#b0b0b0" aria-label="Forward"><MdArrowForward size={17} /></IconButton>
        <IconButton aria-label="Reload"><MdRefresh size={18} /></IconButton>
        <IconButton aria-label="Home"><MdOutlineHome size={19} /></IconButton>
        <Omnibox>
          <IconButton aria-label="Zoom"><MdZoomOut size={18} /></IconButton>
          <IconButton aria-label="Bookmark"><MdStarBorder size={19} /></IconButton>
        </Omnibox>
        <IconButton $w={36} aria-label="Extensions"><MdOutlineExtension size={19} /></IconButton>
        <Divider />
        <IconButton aria-label="Profile"><ProfileIcon /></IconButton>
        <IconButton aria-label="Menu"><MdMoreVert size={19} /></IconButton>
      </Toolbar>
      <Bookmarks>
        <AppsIcon />
        <BookmarkLink href="#bookmarks"><Divider /><MdOutlineFolder size={18} />All Bookmarks</BookmarkLink>
      </Bookmarks>
      <Shell>
        <IconButton $color="#1d2d3e" aria-label="Go back"><ChevronLeft size={15} /></IconButton>
        <LogoLink href="#home" aria-label="SAP"><SapLogo w={52} h={26} /></LogoLink>
        <ShellSearch>
          <IconButton $color="#1d2d3e" aria-label="Search"><Search size={14} /></IconButton>
        </ShellSearch>
        <ShellActions>
          <IconButton $w={39} $color="#1d2d3e" aria-label="Help"><CircleHelp size={15} /></IconButton>
          <IconButton $w={39} $color="#1d2d3e" aria-label="Notifications"><Bell size={14} /></IconButton>
          <Avatar>TM</Avatar>
        </ShellActions>
      </Shell>
      <CodeBar>
        <CodeTitle>Open T-Code</CodeTitle>
        <HomeButton>Home</HomeButton>
      </CodeBar>
      <Stage>
        <Screen>
          <MenuRow>
            <a href="#billing">Billing Document</a>
            <a href="#exit">Exit</a>
          </MenuRow>
          <Form>
            <OutlineButton $w={240} $h={23} $start>Display Document</OutlineButton>
            <DocInput defaultValue="L2" aria-label="Document type" />
            <ButtonRow>
              <OutlineButton $w={36} aria-label="Item details"><FindDocIcon /></OutlineButton>
              <OutlineButton $w={27} aria-label="Select all"><SelectAllIcon /></OutlineButton>
              <OutlineButton $w={27} aria-label="Deselect all"><SelectAllIcon outline /></OutlineButton>
            </ButtonRow>
            <BillingTable />
          </Form>
          <Shade />
          <ArchiveDialog />
        </Screen>
        <PageRail><span>▲</span><PageThumb /><span>▼</span></PageRail>
      </Stage>
      <PopupShadow />
      <Taskbar>
        <IconButton $w={23} aria-label="Start"><WindowsLogo /></IconButton>
        <SearchPill>
          <Search size={16} />
          <input placeholder="Search" aria-label="Search" />
          <Promo><b>VELUX</b>One</Promo>
        </SearchPill>
        {taskItems.map((item) => (
          <TaskItem key={item.label} $alert={item.alert} $open={item.open} $dot={item.dot} aria-label={item.label}>
            {item.icon}
          </TaskItem>
        ))}
        <Tray>
          <News>
            <NewsIcon />
            <span>News for you<small>Former Norther...</small></span>
          </News>
          <TrayCell $w={18}><ChevronUp size={15} /></TrayCell>
          <TrayCell $w={44}><CloudIcon /></TrayCell>
          <TrayCell $w={20}><Mic size={17} strokeWidth={1.5} color="#7fd4ee" /></TrayCell>
          <TrayCell $w={54}>ENG<br />UK</TrayCell>
          <TrayCell $w={22}><NetworkIcon /></TrayCell>
          <TrayCell $w={26}><Volume2 size={16} strokeWidth={1.5} /></TrayCell>
          <TrayCell $w={22}><BatteryIcon /></TrayCell>
          <TrayCell $w={78} $end>08:24<br />13/02/2025</TrayCell>
          <TrayCell $w={30}><Bell size={15} fill="#7fe0ff" color="#7fe0ff" /></TrayCell>
        </Tray>
      </Taskbar>
      <Viewer />
    </Desktop>
  );
};

export default App;
